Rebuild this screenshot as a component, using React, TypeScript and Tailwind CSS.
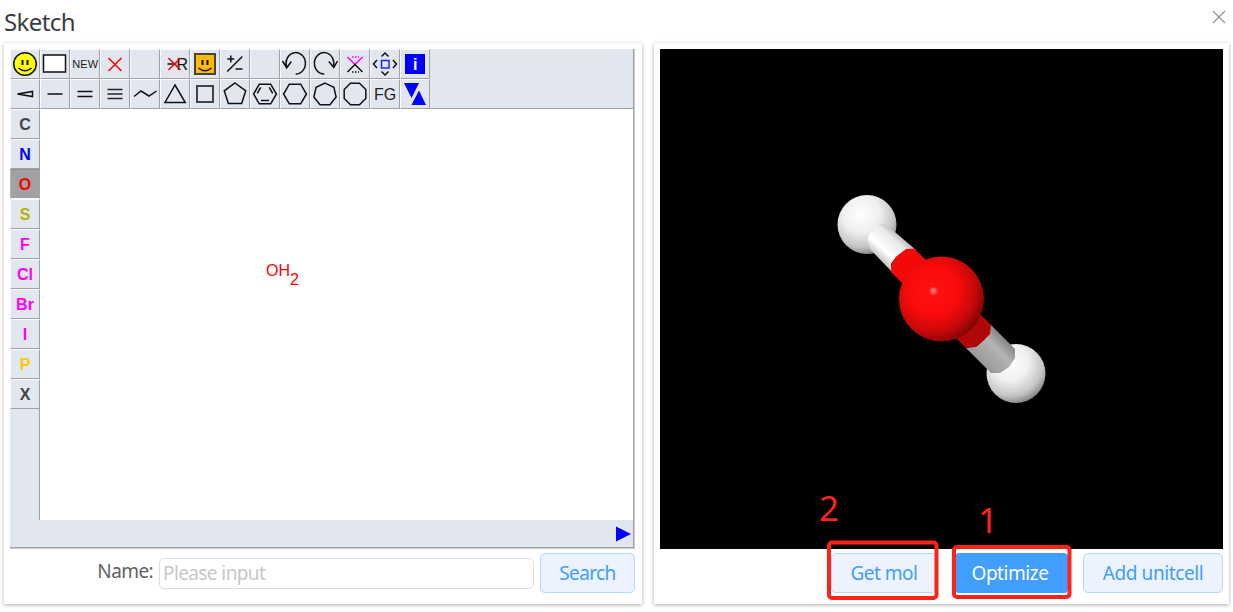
import type { ReactNode } from "react";

function ring(n: number, r: number, start = -90, cx = 15, cy = 15) {
  return Array.from({ length: n }, (_, i) => {
    const a = ((start + (360 / n) * i) * Math.PI) / 180;
    return `${(cx + r * Math.cos(a)).toFixed(2)},${(cy + r * Math.sin(a)).toFixed(2)}`;
  }).join(" ");
}

const label = "font-['Liberation_Sans',sans-serif]";

const topRow: ReactNode[] = [
  <>
    <circle cx="15" cy="15" r="11.3" fill="#ff0" />
    <path d="M12.500 11v5M17.500 11v5" strokeWidth="2" />
    <path d="M8.500 19q6.500 5.500 13 0" />
  </>,
  <rect x="3.500" y="6" width="22" height="17" fill="#fff" />,
  <text x="15.200" y="19" textAnchor="middle" fontSize="11" textLength="26" className={label} fill="#222" stroke="none">NEW</text>,
  <path d="M8.500 9l13 13M21.500 9l-13 13" stroke="#f00" />,
  null,
  <>
    <path d="M7.500 15h9" />
    <text x="16.500" y="20.500" fontSize="16" className={label} fill="#111" stroke="none">R</text>
    <path d="M8.500 9l12 12M20.500 9l-12 12" stroke="#f00" />
  </>,
  <>
    <rect x="5" y="5" width="20" height="20" fill="#ffbb00" stroke="#444" strokeWidth="2" />
    <path d="M12.500 11v5M17.500 11v5" strokeWidth="2" />
    <path d="M8.500 19q6.500 5.500 13 0" />
  </>,
  <path d="M7.300 10h7M10.800 6.500v7M15.500 20h7M22.300 7.500l-15 15" />,
  null,
  <path d="M15.700 25A9.700 10.700 0 1 0 6.800 18.500M2.500 12l4.200 7 4.600-6.500" />,
  <path d="M14.300 25A9.700 10.700 0 1 1 23.200 18M27.500 12l-3.700 6.500-5-6" />,
  <>
    <path d="M7.500 8l7.500 7.500L22.500 8" stroke="#f0f" />
    <path d="M12 8h7" stroke="#f0f" strokeDasharray="1.500 1.500" />
    <path d="M7.500 23l7.500-7.500 7.500 7.500" />
    <path d="M12 23h7" strokeDasharray="1.500 1.500" />
  </>,
  <>
    <rect x="11.500" y="11.500" width="7.500" height="7.500" stroke="#2222ff" />
    <path d="M11.500 7.500l3.500-3.500 3.500 3.500M11.500 22.500l3.500 3.500 3.500-3.500M7 11l-3.500 4 3.500 4M23 11l3.500 4-3.500 4" />
  </>,
  <>
    <rect x="5" y="5" width="20" height="20" fill="#00f" stroke="none" />
    <text x="15.300" y="20.500" textAnchor="middle" fontSize="16" fontWeight="700" className={label} fill="#fff" stroke="none">i</text>
  </>,
];

const bottomRow: ReactNode[] = [
  <path d="M7.500 15l15-2.500v5z" />,
  <path d="M7.500 15h15" stroke="#444" strokeWidth="2" />,
  <path d="M7.500 12.500h15M7.500 17.500h15" />,
  <path d="M7.500 10.500h15M7.500 15h15M7.500 19.500h15" stroke="#222" />,
  <path d="M4 17.500l7-5.500 8 5 7.500-5" />,
  <path d="M15 6L25.300 23.500H5z" />,
  <rect x="7" y="7" width="16" height="16" stroke="#444" strokeWidth="2" />,
  <polygon points={ring(5, 11.3, -90, 15, 15.3)} />,
  <>
    <polygon points={ring(6, 11.4, 0)} />
    <path d="M7.300 14.300l3.400-6M19.300 8.300l3.400 6M11 21.500h8" />
  </>,
  <polygon points={ring(6, 11.4, 0)} />,
  <polygon points={ring(7, 11.4, -90, 15, 15.5)} />,
  <polygon points={ring(8, 11.7, -67.5)} />,
  <text x="15.200" y="20.500" textAnchor="middle" fontSize="16" className={label} fill="#222" stroke="none">FG</text>,
  <path d="M4 4h15l-7.500 15zM26 26H11.500L19 11.500z" fill="#00f" stroke="none" />,
];

function Cell({ children }: { children?: ReactNode }) {
  return (
    <div className="size-[30px] border-t border-l border-b border-r border-t-[#fafbfd] border-l-[#fafbfd] border-r-[#a0a2a8] border-b-[#a0a2a8]">
      <svg width="30" height="30" viewBox="0 0 30 30" className="-mt-px -ml-px block" fill="none" stroke="#111" strokeWidth="1.5">
        {children}
      </svg>
    </div>
  );
}

const elements = [
  { s: "C", c: "text-[#444444]" },
  { s: "N", c: "text-[#0000ff]" },
  { s: "O", c: "text-[#ff0000]" },
  { s: "S", c: "text-[#b3b300]" },
  { s: "F", c: "text-[#ff00ff]" },
  { s: "Cl", c: "text-[#ff00ff]" },
  { s: "Br", c: "text-[#ff00ff]" },
  { s: "I", c: "text-[#ff00ff]" },
  { s: "P", c: "text-[#ffc800]" },
  { s: "X", c: "text-[#444444]" },
];

function Editor() {
  return (
    <div className="flex h-[500px] w-[625px] flex-col border-r border-b border-[#c9ccd4] bg-[#e2e6ee]">
      <div className="flex h-[499px] w-[624px] flex-col border-r border-b border-[#a0a2a8]">
        <div className="h-[60px] shrink-0 border-b border-[#a0a2a8]">
          <div className="flex">{topRow.map((icon, i) => <Cell key={i}>{icon}</Cell>)}</div>
          <div className="flex">{bottomRow.map((icon, i) => <Cell key={i}>{icon}</Cell>)}</div>
        </div>
        <div className="flex h-[411px]">
          <div className="w-[30px] shrink-0 border-r border-[#a0a2a8]">
            {elements.map(({ s, c }) => (
              <div
                key={s}
                className={`flex h-[30px] w-[30px] items-center justify-center border-t border-l border-r border-b pt-px text-base font-bold font-['Liberation_Sans',sans-serif] ${s === "O" ? "border-t-[#909196] border-l-[#b4b5ba] border-r-[#a0a2a6] border-b-[#f4f5f9] bg-[#a0a1a5]" : "border-t-[#fafbfd] border-l-[#fafbfd] border-r-[#a0a2a8] border-b-[#a0a2a8]"} ${c}`}
              >
                {s}
              </div>
            ))}
          </div>
          <svg width="593" height="411" className="block bg-white" fill="#f00" fontSize="16">
            <text x="226" y="167" className={label}>OH</text>
            <text x="250" y="176" className={label}>2</text>
          </svg>
        </div>
        <div className="flex flex-1 items-center justify-end pr-[2px]">
          <svg width="15" height="16" viewBox="0 0 15 16"><path d="M0 .5l15 7.500-15 7.500z" fill="#00f" /></svg>
        </div>
      </div>
    </div>
  );
}

function Molecule() {
  return (
    <svg width="563" height="500" viewBox="660 49 563 500" className="block bg-black">
      <defs>
        <radialGradient id="hydrogen" cx=".4" cy=".32" r=".7">
          <stop offset="0" stopColor="#fff" />
          <stop offset=".45" stopColor="#efefef" />
          <stop offset=".8" stopColor="#c4c4c4" />
          <stop offset="1" stopColor="#858585" />
        </radialGradient>
        <radialGradient id="oxygen" cx=".4" cy=".4" r=".65">
          <stop offset="0" stopColor="#ff1212" />
          <stop offset=".45" stopColor="#f90b0b" />
          <stop offset=".75" stopColor="#c80909" />
          <stop offset="1" stopColor="#780505" />
        </radialGradient>
        <radialGradient id="glint">
          <stop offset="0" stopColor="#ff8080" />
          <stop offset=".4" stopColor="#ff6060" />
          <stop offset="1" stopColor="#ff1515" stopOpacity="0" />
        </radialGradient>
        <linearGradient id="upperBond" gradientUnits="userSpaceOnUse" x1="902" y1="236" x2="880" y2="260">
          <stop offset="0" stopColor="#b4b4b4" />
          <stop offset=".25" stopColor="#eaeaea" />
          <stop offset=".7" stopColor="#fff" />
          <stop offset="1" stopColor="#c4c4c4" />
        </linearGradient>
        <linearGradient id="lowerBond" gradientUnits="userSpaceOnUse" x1="1003" y1="335" x2="978" y2="360">
          <stop offset="0" stopColor="#808080" />
          <stop offset=".4" stopColor="#b4b4b4" />
          <stop offset="1" stopColor="#999" />
        </linearGradient>
      </defs>
      <circle cx="867" cy="224.500" r="29.500" fill="url(#hydrogen)" />
      <path d="M867 239L870 233L877 226L882 223.500L889 227L916 250L905 251L896 257L891 264L892 272L870 249Z" fill="url(#upperBond)" />
      <path d="M914 248.500L928 262L902 283L891.500 272.500L891.500 263L897 256L906 249Z" fill="#f40909" />
      <circle cx="1016" cy="373.500" r="29.500" fill="url(#hydrogen)" />
      <path d="M990 324L1015 349V358L1009 367L1000 373L991 373L966 348L977 346L985 339Z" fill="url(#lowerBond)" />
      <path d="M980 314L991 325L990 334L983 341L976 347L966 348L957 339Z" fill="#b00808" />
      <circle cx="941.500" cy="299" r="42.500" fill="url(#oxygen)" />
      <circle cx="933.500" cy="291" r="5.500" fill="url(#glint)" />
    </svg>
  );
}

const button = "flex h-10 items-center justify-center rounded-[5px] border text-[19px] whitespace-nowrap";
const plain = "border-[#b3d8ff] bg-[#ecf3ff] text-[#409eff]";

export default function App() {
  return (
    <main className="h-[612px] w-[1233px] overflow-hidden bg-white font-['Noto_Sans',sans-serif] text-[#606266]">
      <header className="flex h-[43px] justify-between pl-1">
        <h1 className="pt-[5px] text-[24px] leading-[34px] tracking-[-0.6px] text-[#3c3d40]">Sketch</h1>
        <svg width="14" height="14" viewBox="0 0 14 14" className="mt-[10px] mr-[7px]" stroke="#909399" strokeWidth="1.200">
          <path d="M1 1l12 12M13 1L1 13" />
        </svg>
      </header>
      <div className="flex gap-3 pl-1">
        <section className="h-[561px] w-[638px] bg-white p-[6px] shadow-[0_1px_4px_rgba(0,0,0,0.32)]">
          <Editor />
          <div className="flex items-center pt-1">
            <label className="w-[149px] pr-[6px] pb-1 text-right text-[19px] tracking-[-0.6px]">Name:</label>
            <input
              placeholder="Please input"
              className="h-[31px] w-[375px] rounded-[5px] border border-[#dcdfe6] px-[3px] text-[19px] tracking-[-0.6px] placeholder:text-[#c6c7ca]"
            />
            <button className={`ml-[6px] w-[95px] tracking-[-0.6px] ${button} ${plain}`}>Search</button>
          </div>
        </section>
        <section className="h-[561px] w-[575px] bg-white p-[6px] shadow-[0_1px_4px_rgba(0,0,0,0.32)]">
          <div className="relative">
            <Molecule />
            <div className="flex justify-end pt-1">
              <button className={`mr-[17px] w-[106px] tracking-[-0.5px] ${button} ${plain}`}>Get mol</button>
              <button className={`mr-[14px] w-[115px] border-[#409eff] bg-[#409eff] pr-[3px] tracking-[-0.45px] text-white ${button}`}>Optimize</button>
              <button className={`w-[140px] tracking-[-0.4px] ${button} ${plain}`}>Add unitcell</button>
            </div>
            <svg width="563" height="560" viewBox="660 49 563 560" className="pointer-events-none absolute top-0 left-0" fill="none" stroke="#ff2216" strokeWidth="4">
              <rect x="829" y="542.500" width="107.500" height="55.500" rx="3" />
              <rect x="954" y="547" width="115.500" height="50" rx="3" />
              <text x="819" y="521" fontSize="35" fill="#ff2216" stroke="none">2</text>
              <text x="978" y="533" fontSize="35" fill="#ff2216" stroke="none">1</text>
            </svg>
          </div>
        </section>
      </div>
    </main>
  );
}
